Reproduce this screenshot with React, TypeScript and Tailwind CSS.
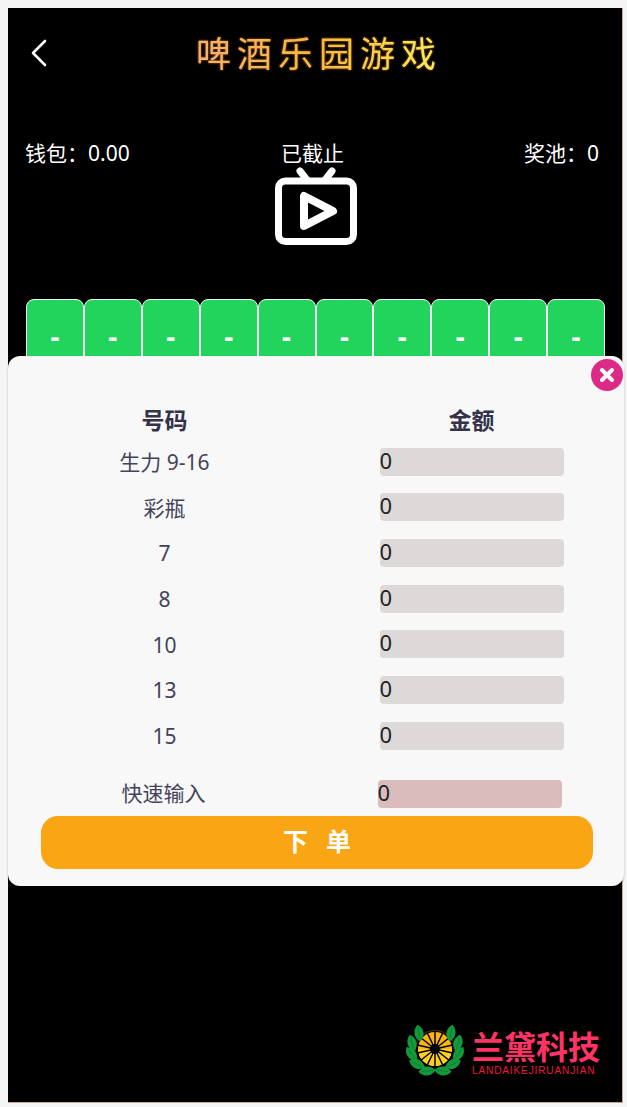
import React from "react";

const rows = ["生力 9-16", "彩瓶", "7", "8", "10", "13", "15"];
const cards = Array.from({ length: 10 }, (_, i) => i);
const leaves: [number, number, number][] = [
  [451, 1033, 10],
  [458, 1043, 15],
  [458.5, 1054, 35],
  [453, 1064, 65],
  [443, 1071, 95],
];

function Wreath() {
  const spokes = Array.from({ length: 14 }, (_, i) => (i * 360) / 14);
  return (
    <svg width="62" height="56" viewBox="404 1024 62 56" className="shrink-0">
      <circle cx="435" cy="1050" r="19.5" fill="none" stroke="#3a2412" strokeWidth="1.5" />
      <circle cx="435" cy="1049" r="17" fill="#fbb316" />
      <path d="M418 1049a17 17 0 0 0 34 0z" fill="#fdd01c" />
      {spokes.map((a) => (
        <line key={a} x1="435" y1="1049" x2="435" y2="1031" stroke="#000" strokeWidth="1.5" transform={`rotate(${a} 435 1049)`} />
      ))}
      <circle cx="435" cy="1049" r="5" fill="#000" />
      {leaves.map(([x, y, r]) => (
        <g key={x + "-" + y}>
          <g transform={`translate(${x} ${y}) rotate(${r})`}>
            <path d="M0 -8.5C6 -4 6 4 0 8.5C-6 4 -6 -4 0 -8.5Z" fill="#139a3c" />
            <path d="M0 -6V6" stroke="#0c6f2b" strokeWidth="0.6" />
          </g>
          <g transform={`translate(${870 - x} ${y}) rotate(${-r})`}>
            <path d="M0 -8.5C6 -4 6 4 0 8.5C-6 4 -6 -4 0 -8.5Z" fill="#139a3c" />
            <path d="M0 -6V6" stroke="#0c6f2b" strokeWidth="0.6" />
          </g>
        </g>
      ))}
    </svg>
  );
}

function Tv() {
  return (
    <svg width="84" height="80" viewBox="274 166 84 80" className="block" fill="none" stroke="#fff" strokeWidth="7" strokeLinecap="round" strokeLinejoin="round">
      <rect x="278.5" y="181" width="75" height="60.5" rx="7" />
      <path d="M300 171L307 180M332 171L325 180" />
      <path d="M304 196V226L333 211Z" strokeWidth="8" />
    </svg>
  );
}

export default function App() {
  const font = { fontFamily: '"Noto Sans","Noto Sans CJK SC",sans-serif' };
  return (
    <div className="h-[1107px] w-[627px] overflow-hidden bg-[#f5f5f5] pl-2 pt-2" style={font}>
      <div className="relative flex h-[1095px] w-[615px] flex-col border-b border-r border-[#c8a890] bg-black text-white">
        <div className="relative flex h-[92px] items-center justify-center">
          <svg width="18" height="28" viewBox="0 0 18 28" className="absolute left-[22px] top-[31px]" fill="none" stroke="#fff" strokeWidth="2.6" strokeLinecap="round" strokeLinejoin="round">
            <path d="M15 2L3 14L15 26" />
          </svg>
          <span className="bg-gradient-to-r from-[#f2b078] via-[#f6b838] to-[#f4ee60] bg-clip-text pl-[8px] text-[35px] font-normal leading-[46px] tracking-[6px] text-transparent drop-shadow-[0_0_1px_#c86a10]">
            啤酒乐园游戏
          </span>
        </div>
        <div className="mt-[40px] grid h-[26px] grid-cols-[1fr_62px_1fr] items-center pl-[17px] pr-[23px] text-[21px] leading-[26px]">
          <span>钱包：0.00</span>
          <span className="whitespace-nowrap">已截止</span>
          <span className="text-right">奖池：0</span>
        </div>
        <div className="flex justify-center pl-[1px]">
          <Tv />
        </div>
        <div className="ml-[18px] mt-[53px] grid w-[579px] grid-cols-10">
          {cards.map((i) => (
            <div key={i} className="flex h-[70px] items-start justify-center rounded-t-[8px] border-[1.5px] border-[#f4fff6] bg-[#22d45c] pt-[19px] text-[28px] font-bold leading-[34px]">
              -
            </div>
          ))}
        </div>

        <div className="absolute left-0 top-[348px] h-[530px] w-[616px] rounded-[12px] bg-[#f8f8f8] pt-[44px] text-[#44435a] shadow-[0_1px_2px_rgba(0,0,0,0.3)]">
          <button className="absolute right-[1px] top-[3px] flex h-[32px] w-[32px] items-center justify-center rounded-full bg-[#dc2a86]">
            <svg width="16" height="16" viewBox="0 0 16 16" fill="none" stroke="#fff" strokeWidth="4" strokeLinecap="round">
              <path d="M3 3L13 13M13 3L3 13" />
            </svg>
          </button>
          <div className="grid grid-cols-[307px_307px] pl-[3px]">
            <div className="h-[39px] text-center text-[23px] font-bold leading-[41px] text-[#33324a]">号码</div>
            <div className="h-[39px] text-center text-[23px] font-bold leading-[41px] text-[#33324a]">金额</div>
            {rows.map((r) => (
              <React.Fragment key={r}>
                <div className="flex h-[45.67px] items-center justify-center pt-[2px] text-[21px]">{r}</div>
                <div className="flex h-[45.67px] items-center justify-center">
                  <input readOnly value="0" className="h-[28px] w-[184px] rounded-[4px] bg-[#dcd9d8] pb-[3px] text-[22px] text-[#222]" />
                </div>
              </React.Fragment>
            ))}
          </div>
          <div className="mt-[13px] grid h-[44px] grid-cols-[307px_307px] items-center pl-[1px]">
            <div className="pl-[2px] text-center text-[21px]">快速输入</div>
            <div className="flex justify-center">
              <input readOnly value="0" className="h-[28px] w-[184px] rounded-[4px] bg-[#dbbcbc] pb-[3px] text-[22px] text-[#222]" />
            </div>
          </div>
          <button className="ml-[33px] flex h-[53px] w-[552px] items-center justify-center gap-[18px] rounded-[17px] bg-[#faa514] text-[25px] font-bold text-white">
            <span>下</span>
            <span>单</span>
          </button>
        </div>

        <div className="absolute left-[396px] top-[1016px] flex items-start gap-[6px]">
          <Wreath />
          <div className="mt-[3px] flex flex-col">
            <span className="text-[32px] font-bold leading-[36px] text-[#ff3366]" style={{ fontFamily: '"Noto Sans CJK SC",sans-serif' }}>兰黛科技</span>
            <span className="mt-[1px] text-[10px] leading-[14px] tracking-[0.9px] text-[#f0143c]" style={{ fontFamily: '"Liberation Sans",sans-serif' }}>LANDAIKEJIRUANJIAN</span>
          </div>
        </div>
      </div>
    </div>
  );
}
